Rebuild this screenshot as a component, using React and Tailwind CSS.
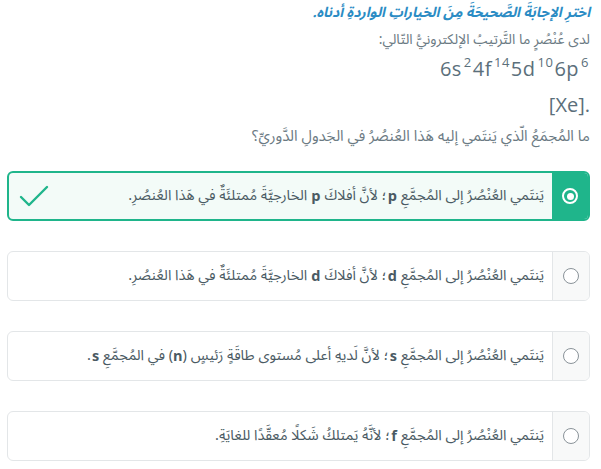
import React from 'react';

const B = ({ children, tight }) => (
  <b className={tight ? 'font-bold mr-[4px] ml-[1px]' : 'font-bold mx-[4px]'} style={{ fontFamily: '"Open Sans", sans-serif' }}>{children}</b>
);

const options = [
  { id: 'p', text: <>يَنتَمي العُنْصُرُ إلى المُجمَّعِ<B tight>p</B>؛ لأنَّ أفلاكَ<B>p</B>الخارجيَّةَ مُمتلئَةٌ في هَذا العُنصُرِ.</>, selected: true },
  { id: 'd', text: <>يَنتَمي العُنْصُرُ إلى المُجمَّعِ<B tight>d</B>؛ لأنَّ أفلاكَ<B>d</B>الخارجيَّةَ مُمتلئَةٌ في هَذا العُنصُرِ.</> },
  { id: 's', text: <>يَنتَمي العُنْصُرُ إلى المُجمَّعِ<B tight>s</B>؛ لأنَّ لَديهِ أعلى مُستوى طاقَةٍ رَئيسٍ (<b className="font-bold" style={{ fontFamily: '"Open Sans", sans-serif' }}>n</b>) في المُجمَّعِ<B tight>s</B>.</> },
  { id: 'f', text: <>يَنتَمي العُنْصُرُ إلى المُجمَّعِ<B tight>f</B>؛ لأنَّهُ يَمتلكُ شَكلًا مُعقَّدًا للغايَةِ.</> },
];

function Option({ text, selected }) {
  if (selected) {
    return (
      <div className="flex h-[50px] rounded-md border-2 border-[#1fb58b] bg-[#f3fbf8] overflow-hidden">
        <div className="w-[36px] shrink-0 bg-[#1fb58b] flex items-center justify-center">
          <div className="w-[16px] h-[16px] rounded-full border-2 border-white flex items-center justify-center">
            <div className="w-[7px] h-[7px] rounded-full bg-white" />
          </div>
        </div>
        <div className="flex-1 flex items-center pr-[8px] text-[14.5px] text-[#4a5a63]">{text}</div>
        <div className="w-[50px] flex items-center justify-center">
          <svg width="30" height="22" viewBox="0 0 30 22" fill="none">
            <path d="M2 12 L10 20 L28 2" stroke="#1fb58b" strokeWidth="2.4" strokeLinecap="round" strokeLinejoin="round" />
          </svg>
        </div>
      </div>
    );
  }
  return (
    <div className="flex h-[50px] rounded-md border border-[#e3e6e8] bg-white overflow-hidden">
      <div className="w-[37px] shrink-0 bg-[#f8f9f9] border-l border-[#e3e6e8] flex items-center justify-center">
        <div className="w-[16px] h-[16px] rounded-full border border-[#8a9399] bg-white" />
      </div>
      <div className="flex-1 flex items-center pr-[8px] text-[14.5px] text-[#4a5a63]">{text}</div>
    </div>
  );
}

const Sup = ({ children }) => <span className="relative top-[-9px] text-[13px] ml-[2px] mr-[1px]">{children}</span>;

export default function App() {
  return (
    <div dir="rtl" className="w-[601px] h-[469px] bg-white overflow-hidden pr-[11px] pl-[11px] pt-[1px]" style={{ fontFamily: '"Noto Sans Arabic", "DejaVu Sans", sans-serif' }}>
      <h1 className="text-[14px] font-bold italic text-[#2b8cc4] leading-[24px]">
        اخترِ الإجابَةَ الصَّحيحَةَ مِنَ الخياراتِ الواردةِ أدناه.
      </h1>
      <p className="mt-[4px] text-[14px] text-[#6b7a83] leading-[22px]">لدى عُنْصُرٍ ما التَّرتيبُ الإلكترونيُّ التّالي:</p>
      <p dir="ltr" className="text-right mt-[3px] text-[20px] text-[#5b6f7b] leading-[30px] tracking-[0.5px]" style={{ fontFamily: '"Open Sans", sans-serif' }}>
        6s<Sup>2</Sup>4f<Sup>14</Sup>5d<Sup>10</Sup>6p<Sup>6</Sup>
      </p>
      <p className="mt-[4px] text-[20px] text-[#5b6f7b] leading-[30px]" style={{ fontFamily: '"Open Sans", sans-serif' }}>.[Xe]</p>
      <p className="mt-[5px] text-[15px] text-[#6b7a83] leading-[22px]">ما المُجمَعُ الّذي يَنتَمي إليه هَذا العُنصُرُ في الجَدولِ الدَّوريِّ؟</p>
      <div className="mt-[24px] flex flex-col gap-[30px] ml-[-4px]">
        {options.map((o) => (
          <Option key={o.id} text={o.text} selected={o.selected} />
        ))}
      </div>
    </div>
  );
}
